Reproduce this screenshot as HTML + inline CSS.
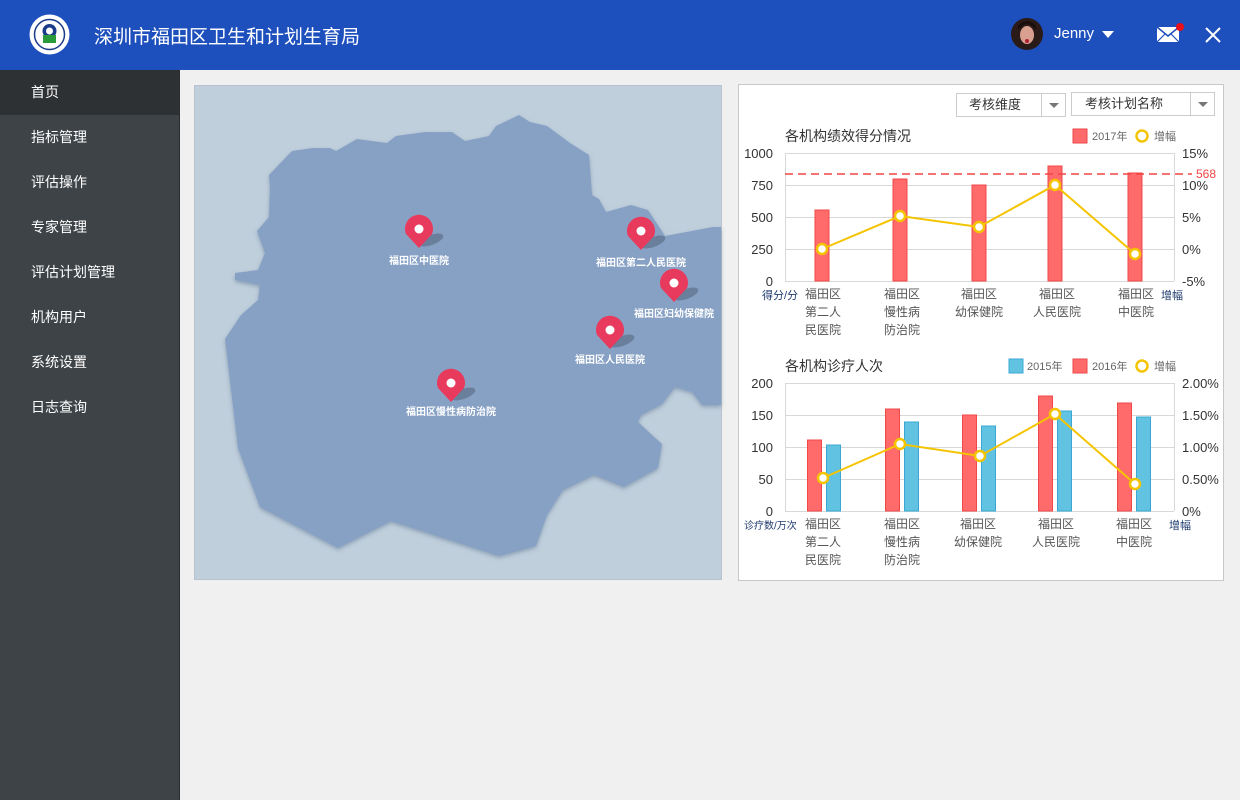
<!DOCTYPE html>
<html><head><meta charset="utf-8"><style>
*{margin:0;padding:0;box-sizing:border-box}
body{width:1240px;height:800px;overflow:hidden;background:#f0f0f0;font-family:"Liberation Sans","Noto Sans CJK SC",sans-serif;position:relative}
.hd{position:absolute;left:0;top:0;width:1240px;height:70px;background:#1d4fbd}
.hd .t{position:absolute;left:94px;top:22px;color:#fff;font-size:19px}
.sb{position:absolute;left:0;top:70px;width:180px;height:730px;background:#3e4347;border-right:1px solid #2a2d30}
.sb div{height:45px;line-height:45px;color:#fff;font-size:14px;padding-left:31px}
.sb div.a{background:#2e3134}
.map{position:absolute;left:194px;top:85px;width:528px;height:495px;background:#c0cfdc;border:1px solid #b8c2cc}
.panel{position:absolute;left:738px;top:84px;width:486px;height:497px;background:#fff;border:1px solid #c8c8c8}
.sel{position:absolute;height:24px;border:1px solid #ccc;background:#fff;font-size:13px;color:#333;line-height:22px}
.sel span{position:absolute;right:0;top:0;width:24px;height:22px;border-left:1px solid #ccc}
.sel span:after{content:"";position:absolute;left:7px;top:9px;border:5px solid transparent;border-top:5px solid #777}
</style></head><body>
<div class="hd">
<svg style="position:absolute;left:29px;top:14px" width="41" height="41" viewBox="0 0 41 41"><circle cx="20.5" cy="20.5" r="20" fill="#fff"/><circle cx="20.5" cy="20.5" r="15" fill="none" stroke="#1a3a8a" stroke-width="1.5"/><circle cx="20.5" cy="17" r="7" fill="#1a3a8a"/><circle cx="20.5" cy="17" r="3.5" fill="#fff"/><rect x="14" y="21" width="13" height="8" fill="#2a9a3a"/></svg>
<div class="t">深圳市福田区卫生和计划生育局</div>
<svg style="position:absolute;left:1011px;top:18px" width="32" height="32"><circle cx="16" cy="16" r="16" fill="#2a1a18"/><ellipse cx="16" cy="17" rx="7" ry="9" fill="#d9a090"/><path d="M7 12 Q16 0 25 12 L25 8 Q16 -2 7 8Z" fill="#1a0e0c"/><circle cx="16" cy="23" r="2" fill="#b02030"/></svg>
<div style="position:absolute;left:1054px;top:25px;color:#fff;font-size:15px">Jenny</div>
<div style="position:absolute;left:1102px;top:31px;border:6px solid transparent;border-top:7px solid #fff"></div>
<svg style="position:absolute;left:1155px;top:22px" width="30" height="22"><rect x="2" y="5" width="22" height="15" fill="#fff"/><path d="M2 5 L13 14 L24 5" fill="none" stroke="#1d4fbd" stroke-width="1.5"/><path d="M2 20 L10 12 M24 20 L16 12" stroke="#1d4fbd" stroke-width="1.2"/><circle cx="25" cy="5" r="4" fill="#e8101a"/></svg>
<svg style="position:absolute;left:1204px;top:26px" width="18" height="18"><path d="M2 2L16 16M16 2L2 16" stroke="#fff" stroke-width="2"/></svg>
</div>
<div class="sb"><div class="a">首页</div><div>指标管理</div><div>评估操作</div><div>专家管理</div><div>评估计划管理</div><div>机构用户</div><div>系统设置</div><div>日志查询</div></div>
<div class="map"></div>
<div class="panel">
<div class="sel" style="left:217px;top:8px;width:110px;padding-left:12px">考核维度<span></span></div>
<div class="sel" style="left:332px;top:7px;width:144px;padding-left:13px">考核计划名称<span></span></div>
</div>
<svg style="position:absolute;left:0;top:0" width="1240" height="800" font-family="Liberation Sans,Noto Sans CJK SC,sans-serif">
<defs><filter id="sh"><feDropShadow dx="0" dy="2" stdDeviation="2" flood-color="#56708f" flood-opacity=".5"/></filter></defs>
<path filter="url(#sh)" fill="#87a1c5" d="M269,175 L292,151 L313,148 L330,148 L336,151 L357,139 L387,143 L396,136 L425,132 L452,132 L465,141 L489,136 L496,126 L519,115 L530,122 L547,126 L570,143 L589,155 L592,195 L599,199 L606,212 L631,205 L648,210 L665,236 L713,227 L721,227 L721,405 L702,405 L692,392 L675,387 L662,404 L641,415 L638,422 L662,444 L658,468 L624,487 L594,475 L563,490 L547,515 L536,546 L499,556 L391,521 L338,548 L260,507 L238,448 L225,339 L241,315 L258,300 L260,285 L235,280 L235,273 L258,270 L265,253 L257,231 L269,217 L270,187Z"/>
<g font-size="10" font-weight="bold" fill="#fff" text-anchor="middle">
<g transform="translate(419,234)"><ellipse cx="12" cy="6" rx="13" ry="5" fill="#6a7f9c" transform="rotate(-20 12 6)"/><path d="M0,14 L-13,0 A14,14 0 1 1 13,0Z" fill="#e83a5c"/><circle cx="0" cy="-5" r="4.5" fill="#fff"/><text y="30">福田区中医院</text></g>
<g transform="translate(641,236)"><ellipse cx="12" cy="6" rx="13" ry="5" fill="#6a7f9c" transform="rotate(-20 12 6)"/><path d="M0,14 L-13,0 A14,14 0 1 1 13,0Z" fill="#e83a5c"/><circle cx="0" cy="-5" r="4.5" fill="#fff"/><text y="30">福田区第二人民医院</text></g>
<g transform="translate(674,288)"><ellipse cx="12" cy="6" rx="13" ry="5" fill="#6a7f9c" transform="rotate(-20 12 6)"/><path d="M0,14 L-13,0 A14,14 0 1 1 13,0Z" fill="#e83a5c"/><circle cx="0" cy="-5" r="4.5" fill="#fff"/><text y="29">福田区妇幼保健院</text></g>
<g transform="translate(610,335)"><ellipse cx="12" cy="6" rx="13" ry="5" fill="#6a7f9c" transform="rotate(-20 12 6)"/><path d="M0,14 L-13,0 A14,14 0 1 1 13,0Z" fill="#e83a5c"/><circle cx="0" cy="-5" r="4.5" fill="#fff"/><text y="28">福田区人民医院</text></g>
<g transform="translate(451,388)"><ellipse cx="12" cy="6" rx="13" ry="5" fill="#6a7f9c" transform="rotate(-20 12 6)"/><path d="M0,14 L-13,0 A14,14 0 1 1 13,0Z" fill="#e83a5c"/><circle cx="0" cy="-5" r="4.5" fill="#fff"/><text y="27">福田区慢性病防治院</text></g>
</g>
<!-- chart1 -->
<text x="785" y="141" font-size="14" fill="#333">各机构绩效得分情况</text>
<rect x="1073" y="129" width="14" height="14" fill="#ff6b6b" stroke="#e84a4a"/><text x="1092" y="140" font-size="11" fill="#666">2017年</text>
<circle cx="1142" cy="136" r="5.5" fill="#fff" stroke="#f5c400" stroke-width="2.5"/><text x="1154" y="140" font-size="11" fill="#666">增幅</text>
<g stroke="#d8d8d8"><line x1="785" y1="153.5" x2="1174" y2="153.5"/><line x1="785" y1="185.5" x2="1174" y2="185.5"/><line x1="785" y1="217.5" x2="1174" y2="217.5"/><line x1="785" y1="249.5" x2="1174" y2="249.5"/><line x1="785" y1="281.5" x2="1174" y2="281.5"/><line x1="785.5" y1="153" x2="785.5" y2="281"/><line x1="1174.5" y1="153" x2="1174.5" y2="281"/></g>
<g font-size="13" fill="#333" text-anchor="end"><text x="773" y="158">1000</text><text x="773" y="190">750</text><text x="773" y="222">500</text><text x="773" y="254">250</text><text x="773" y="286">0</text></g>
<g font-size="13" fill="#333"><text x="1182" y="158">15%</text><text x="1182" y="190">10%</text><text x="1182" y="222">5%</text><text x="1182" y="254">0%</text><text x="1182" y="286">-5%</text></g>
<g fill="#ff6b6b" stroke="#f04848"><rect x="815" y="210" width="14" height="71"/><rect x="893" y="179" width="14" height="102"/><rect x="972" y="185" width="14" height="96"/><rect x="1048" y="166" width="14" height="115"/><rect x="1128" y="173" width="14" height="108"/></g>
<line x1="785" y1="174" x2="1192" y2="174" stroke="#f04545" stroke-width="1.5" stroke-dasharray="8,5"/><text x="1196" y="178" font-size="12" fill="#f04545">568</text>
<polyline points="822,249 900,216 979,227 1055,185 1135,254" fill="none" stroke="#f5c400" stroke-width="2"/>
<g fill="#fff" stroke="#f5c400" stroke-width="2.5"><circle cx="822" cy="249" r="5"/><circle cx="900" cy="216" r="5"/><circle cx="979" cy="227" r="5"/><circle cx="1055" cy="185" r="5"/><circle cx="1135" cy="254" r="5"/></g>
<g font-size="11" fill="#1e3a6e"><text x="762" y="299">得分/分</text><text x="1161" y="299">增幅</text></g>
<g font-size="12" fill="#555" text-anchor="middle">
<text x="823" y="298">福田区</text><text x="823" y="316">第二人</text><text x="823" y="334">民医院</text>
<text x="902" y="298">福田区</text><text x="902" y="316">慢性病</text><text x="902" y="334">防治院</text>
<text x="979" y="298">福田区</text><text x="979" y="316">幼保健院</text>
<text x="1057" y="298">福田区</text><text x="1057" y="316">人民医院</text>
<text x="1136" y="298">福田区</text><text x="1136" y="316">中医院</text></g>
<!-- chart2 -->
<text x="785" y="371" font-size="14" fill="#333">各机构诊疗人次</text>
<rect x="1009" y="359" width="14" height="14" fill="#62c2e2" stroke="#3aa8d4"/><text x="1027" y="370" font-size="11" fill="#666">2015年</text>
<rect x="1073" y="359" width="14" height="14" fill="#ff6b6b" stroke="#e84a4a"/><text x="1092" y="370" font-size="11" fill="#666">2016年</text>
<circle cx="1142" cy="366" r="5.5" fill="#fff" stroke="#f5c400" stroke-width="2.5"/><text x="1154" y="370" font-size="11" fill="#666">增幅</text>
<g stroke="#d8d8d8"><line x1="785" y1="383.5" x2="1174" y2="383.5"/><line x1="785" y1="415.5" x2="1174" y2="415.5"/><line x1="785" y1="447.5" x2="1174" y2="447.5"/><line x1="785" y1="479.5" x2="1174" y2="479.5"/><line x1="785" y1="511.5" x2="1174" y2="511.5"/><line x1="785.5" y1="383" x2="785.5" y2="511"/><line x1="1174.5" y1="383" x2="1174.5" y2="511"/></g>
<g font-size="13" fill="#333" text-anchor="end"><text x="773" y="388">200</text><text x="773" y="420">150</text><text x="773" y="452">100</text><text x="773" y="484">50</text><text x="773" y="516">0</text></g>
<g font-size="13" fill="#333"><text x="1182" y="388">2.00%</text><text x="1182" y="420">1.50%</text><text x="1182" y="452">1.00%</text><text x="1182" y="484">0.50%</text><text x="1182" y="516">0%</text></g>
<g fill="#ff6b6b" stroke="#f04848"><rect x="807.5" y="440" width="14" height="71"/><rect x="885.5" y="409" width="14" height="102"/><rect x="962.5" y="415" width="14" height="96"/><rect x="1038.5" y="396" width="14" height="115"/><rect x="1117.5" y="403" width="14" height="108"/></g>
<g fill="#62c2e2" stroke="#3aa8d4"><rect x="826.5" y="445" width="14" height="66"/><rect x="904.5" y="422" width="14" height="89"/><rect x="981.5" y="426" width="14" height="85"/><rect x="1057.5" y="411" width="14" height="100"/><rect x="1136.5" y="417" width="14" height="94"/></g>
<polyline points="823,478 900,444 980,456 1055,414 1135,484" fill="none" stroke="#f5c400" stroke-width="2"/>
<g fill="#fff" stroke="#f5c400" stroke-width="2.5"><circle cx="823" cy="478" r="5"/><circle cx="900" cy="444" r="5"/><circle cx="980" cy="456" r="5"/><circle cx="1055" cy="414" r="5"/><circle cx="1135" cy="484" r="5"/></g>
<g font-size="10" fill="#1e3a6e"><text x="744" y="529">诊疗数/万次</text><text x="1169" y="529" font-size="11">增幅</text></g>
<g font-size="12" fill="#555" text-anchor="middle">
<text x="823" y="528">福田区</text><text x="823" y="546">第二人</text><text x="823" y="564">民医院</text>
<text x="902" y="528">福田区</text><text x="902" y="546">慢性病</text><text x="902" y="564">防治院</text>
<text x="978" y="528">福田区</text><text x="978" y="546">幼保健院</text>
<text x="1056" y="528">福田区</text><text x="1056" y="546">人民医院</text>
<text x="1134" y="528">福田区</text><text x="1134" y="546">中医院</text></g>
</svg>
</body></html>
